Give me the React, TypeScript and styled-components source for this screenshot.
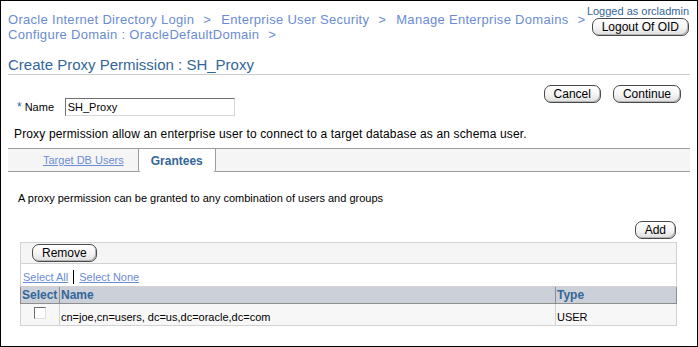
import React from "react";
import styled, { createGlobalStyle } from "styled-components";

const GlobalStyle = createGlobalStyle`
  html, body {
    margin: 0;
    padding: 0;
    background: #fff;
  }
  body {
    font-family: "Liberation Sans", Arial, sans-serif;
    font-size: 12px;
    color: #000;
  }
`;

const Frame = styled.div`
  box-sizing: border-box;
  width: 698px;
  height: 347px;
  border: 1px solid #000;
  padding: 0 7px;
  overflow: hidden;
`;

const Header = styled.div`
  display: flex;
  justify-content: space-between;
  align-items: flex-start;
`;

const Crumbs = styled.div`
  display: flex;
  flex-wrap: wrap;
  flex: 1;
  min-width: 0;
  margin-right: -10px;
  column-gap: 10px;
  margin-top: 11px;
  font-size: 13px;
  line-height: 15px;
  letter-spacing: 0.3px;
  color: #6b8cd4;
`;

const Crumb = styled.span`
  white-space: nowrap;
`;

const Sep = styled.span`
  margin-left: 9px;
`;

const UserBox = styled.div`
  display: flex;
  flex: none;
  flex-direction: column;
  align-items: flex-end;
  margin-top: 3px;
  margin-right: 1px;
`;

const LoggedAs = styled.div`
  white-space: nowrap;
  font-size: 11px;
  line-height: 14px;
  color: #336699;
`;

const Button = styled.button`
  box-sizing: border-box;
  height: 18px;
  padding: 0 9px;
  border: 1px solid #4a4a4a;
  border-radius: 7px;
  background: linear-gradient(#ffffff, #f4f4f4 55%, #dedede);
  box-shadow: inset -1px -1px 0 #b5b5b5;
  font-family: "Liberation Sans", Arial, sans-serif;
  font-size: 12px;
  line-height: 16px;
  white-space: nowrap;
  color: #000;
  cursor: pointer;
`;

const PageTitle = styled.h1`
  margin: 14px 0 0 0;
  padding: 0;
  font-weight: normal;
  font-size: 15px;
  line-height: 18px;
  color: #336699;
  border-bottom: 1px solid #cccccc;
`;

const FormRow = styled.div`
  display: flex;
  justify-content: space-between;
  align-items: flex-start;
  margin-top: 10px;
  padding-right: 9px;
`;

const NameField = styled.label`
  display: flex;
  align-items: center;
  margin-top: 13px;
  padding-left: 9px;
`;

const Req = styled.span`
  color: #336699;
  font-size: 12px;
  margin-right: 3px;
`;

const FieldLabel = styled.span`
  width: 40px;
  font-size: 11px;
`;

const TextInput = styled.input`
  box-sizing: border-box;
  width: 170px;
  height: 18px;
  padding: 0 2px;
  border-style: solid;
  border-width: 1px;
  border-color: #707070 #d8d8d8 #d8d8d8 #707070;
  font-family: "Liberation Sans", Arial, sans-serif;
  font-size: 11px;
  color: #000;
`;

const ButtonGroup = styled.div`
  display: flex;
  gap: 12px;
`;

const Description = styled.p`
  margin: 11px 0 0 0;
  padding-left: 6px;
  font-size: 12px;
  line-height: 14px;
  letter-spacing: 0.15px;
`;

const TabBar = styled.div`
  display: flex;
  box-sizing: border-box;
  height: 24px;
  margin-top: 7px;
  padding-left: 21px;
  background: #f5f5f5;
  border-top: 1px solid #9c9c9c;
  border-bottom: 1px solid #9c9c9c;
`;

const Tab = styled.a<{ $active?: boolean }>`
  display: flex;
  align-items: center;
  padding: 0 ${(p) => (p.$active ? 12 : 13)}px;
  margin-bottom: ${(p) => (p.$active ? -1 : 0)}px;
  background: ${(p) => (p.$active ? "#fff" : "transparent")};
  border-left: 1px solid ${(p) => (p.$active ? "#9c9c9c" : "transparent")};
  border-right: 1px solid ${(p) => (p.$active ? "#9c9c9c" : "transparent")};
  border-radius: ${(p) => (p.$active ? "0 0 3px 3px" : "0")};
  font-size: ${(p) => (p.$active ? 12 : 11)}px;
  font-weight: ${(p) => (p.$active ? "bold" : "normal")};
  color: ${(p) => (p.$active ? "#336699" : "#6b8cd4")};
  text-decoration: ${(p) => (p.$active ? "none" : "underline")};
`;

const Section = styled.div`
  padding: 0 13px 0 12px;
`;

const Hint = styled.p`
  margin: 19px 0 0 -2px;
  font-size: 11px;
  line-height: 14px;
`;

const AddRow = styled.div`
  display: flex;
  justify-content: flex-end;
  margin-top: 16px;
  padding-right: 1px;
`;

const Table = styled.table`
  width: 100%;
  margin-top: 3px;
  border-collapse: collapse;
  font-size: 11px;
`;

const ToolCell = styled.td<{ $shade?: boolean }>`
  height: 20px;
  padding: ${(p) => (p.$shade ? "0 0 0 11px" : "0 0 2px 2px")};
  background: ${(p) => (p.$shade ? "#f5f5f5" : "#fff")};
  border: 1px solid #d2d2d2;
  vertical-align: ${(p) => (p.$shade ? "middle" : "bottom")};
`;

const LinkText = styled.a`
  color: #6b8cd4;
  text-decoration: underline;
`;

const Divider = styled.span`
  display: inline-block;
  width: 1px;
  height: 14px;
  margin: 0 5px;
  background: #000;
  vertical-align: -3px;
`;

const Th = styled.th<{ $w?: number }>`
  height: 16px;
  padding: 0 1px;
  width: ${(p) => (p.$w ? `${p.$w}px` : "auto")};
  background: #ccd0d8;
  border: 1px solid #8e8e8e;
  text-align: left;
  font-size: 12px;
  line-height: 16px;
  font-weight: bold;
  color: #336699;
`;

const Td = styled.td<{ $center?: boolean }>`
  height: 16px;
  padding: ${(p) => (p.$center ? "3px 1px 2px" : "4px 1px 0")};
  background: #f7f7f7;
  border: 1px solid #d2d2d2;
  text-align: ${(p) => (p.$center ? "center" : "left")};
  vertical-align: ${(p) => (p.$center ? "top" : "middle")};
`;

const CheckBox = styled.span`
  display: inline-block;
  box-sizing: border-box;
  width: 12px;
  height: 12px;
  border-style: solid;
  border-width: 1px;
  border-color: #6e6e6e #dcdcdc #dcdcdc #6e6e6e;
  background: #fff;
  vertical-align: top;
`;

const crumbs = [
  "Oracle Internet Directory Login",
  "Enterprise User Security",
  "Manage Enterprise Domains",
  "Configure Domain : OracleDefaultDomain",
];

export default function App() {
  return (
    <>
      <GlobalStyle />
      <Frame>
        <Header>
          <Crumbs>
            {crumbs.map((c) => (
              <Crumb key={c}>
                {c}
                <Sep>&gt;</Sep>
              </Crumb>
            ))}
          </Crumbs>
          <UserBox>
            <LoggedAs>Logged as orcladmin</LoggedAs>
            <Button>Logout Of OID</Button>
          </UserBox>
        </Header>

        <PageTitle>Create Proxy Permission : SH_Proxy</PageTitle>

        <FormRow>
          <NameField>
            <Req>*</Req>
            <FieldLabel>Name</FieldLabel>
            <TextInput defaultValue="SH_Proxy" />
          </NameField>
          <ButtonGroup>
            <Button>Cancel</Button>
            <Button>Continue</Button>
          </ButtonGroup>
        </FormRow>

        <Description>
          Proxy permission allow an enterprise user to connect to a target database as an schema user.
        </Description>

        <TabBar>
          <Tab>Target DB Users</Tab>
          <Tab $active>Grantees</Tab>
        </TabBar>

        <Section>
          <Hint>A proxy permission can be granted to any combination of users and groups</Hint>
          <AddRow>
            <Button>Add</Button>
          </AddRow>
          <Table>
            <tbody>
              <tr>
                <ToolCell colSpan={3} $shade>
                  <Button>Remove</Button>
                </ToolCell>
              </tr>
              <tr>
                <ToolCell colSpan={3}>
                  <LinkText>Select All</LinkText>
                  <Divider />
                  <LinkText>Select None</LinkText>
                </ToolCell>
              </tr>
              <tr>
                <Th $w={36}>Select</Th>
                <Th>Name</Th>
                <Th $w={118}>Type</Th>
              </tr>
              <tr>
                <Td $center>
                  <CheckBox />
                </Td>
                <Td>cn=joe,cn=users, dc=us,dc=oracle,dc=com</Td>
                <Td>USER</Td>
              </tr>
            </tbody>
          </Table>
        </Section>
      </Frame>
    </>
  );
}
